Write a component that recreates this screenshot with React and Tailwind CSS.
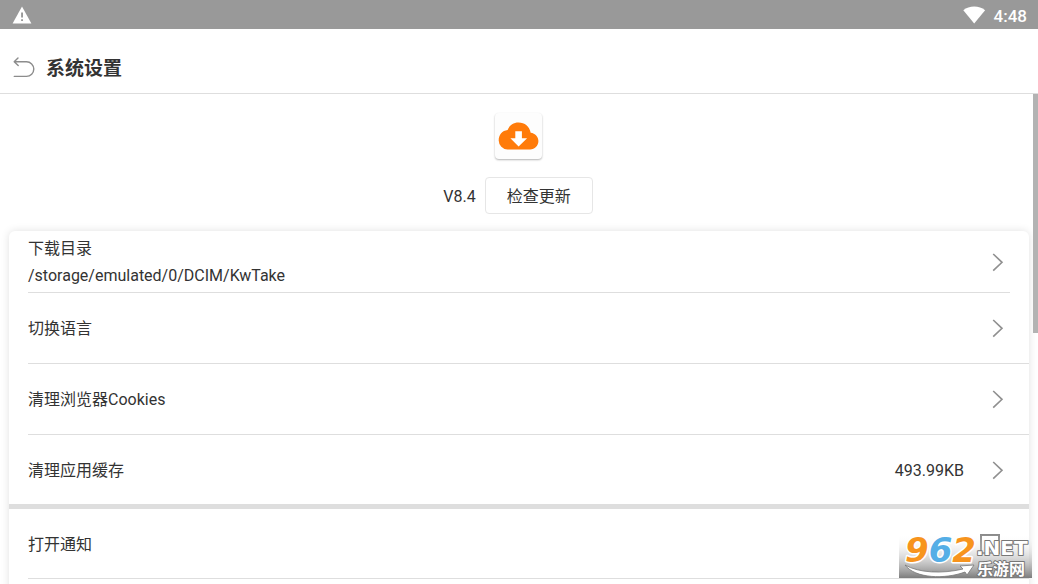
import React, { useState } from "react";

const BackIcon = () => (
    <svg className="w-6 h-6" viewBox="0 0 24 24" fill="none" stroke="#8c8c8c" strokeWidth="1.4" strokeLinecap="round" strokeLinejoin="round">
        <path d="M6 1 2.200 4.800l4 3.800M2.500 4.800h12a7.300 7.300 0 0 1 0 14.600H2.300" />
    </svg>
);

const Chevron = () => (
    <svg className="w-3 h-5 shrink-0" viewBox="0 0 12 20" fill="none" stroke="#909090" strokeWidth="1.6">
        <path d="M1.2 2 10 10.3 1.2 18.6" />
    </svg>
);

const StatusBar = () => (
    <div className="h-[29px] shrink-0 bg-[#999999] flex items-center justify-between pl-3 pr-[11px] text-white">
        <svg className="w-5 h-[18px]" viewBox="0 0 20 18" fill="#fff">
            <path d="M10 .5 19.4 17.5H.6Z" />
            <path d="M9.1 6.6h1.9v5H9.1zM9.1 13.2h1.9v1.9H9.1z" fill="#999" />
        </svg>
        <div className="flex items-center gap-2">
            <svg className="w-[23px] h-[18px]" viewBox="0 0 23 18" fill="#fff">
                <path d="M.3 4.2C3.3 1.9 7.100.6 11.200.6s7.900 1.300 10.900 3.600L11.200 17.600Z" />
            </svg>
            <span className="text-[17px] leading-5 font-medium pt-0.5">4:48</span>
        </div>
    </div>
);

const AppLogo = () => (
    <div className="w-[47px] h-[46px] rounded-sm bg-[#fdfdfd] shadow-[0_1px_2px_rgba(0,0,0,0.3)] flex items-center justify-center">
        <svg className="w-[41px] h-7" viewBox="0 0 41 28">
            <path
                d="M9.500 27.500A9.300 9.300 0 0 1 .7 18.400C.7 13 4.300 8.700 9.600 8.100 11.300 3.600 15.300.6 20.500.6c6.300 0 11 4.100 12.200 10.100 4.500.6 7.700 4 7.700 8.300 0 4.800-3.600 8.500-8.300 8.500Z"
                fill="#ff7b0a"
            />
            <path d="M17.300 9.300h6.600v7h5.200l-8.500 8.200-8.200-8.200h4.900Z" fill="#fff" />
        </svg>
    </div>
);

const SettingRow = ({ label, value, last }) => (
    <button
        type="button"
        className={`flex items-center justify-between text-left ml-[19px] pr-[25px] ${last ? "h-[69px]" : "h-[71px] border-b border-[#dedede]"}`}
    >
        <span className="pt-0.5">{label}</span>
        <span className="flex items-center gap-7">
            {value && <span className="pt-0.5">{value}</span>}
            <Chevron />
        </span>
    </button>
);

const Watermark = () => (
    <svg
        className="absolute right-[6px] bottom-[6px] w-[133px] h-11 overflow-visible"
        viewBox="0 0 133 44"
        strokeLinejoin="round"
    >
        <defs>
            <linearGradient id="shade" x1="0" y1="0" x2="0" y2="1">
                <stop offset="0" stopColor="#fff" stopOpacity="0" />
                <stop offset="1" stopColor="#7c7c7c" />
            </linearGradient>
        </defs>
        <rect width="133" height="44" fill="url(#shade)" />
        <path d="M6 31c14 8 37 9 58 4l-3-3 14-1-7 10-2-3C46 45.500 16 44.500 6 31Z" fill="#fff" stroke="#777" strokeWidth=".8" />
        <text x="6" y="28" className="font-['DejaVu_Sans'] font-bold italic text-[34px]" fill="#f7941d" stroke="#fff" strokeWidth="3" paintOrder="stroke">
            9<tspan fill="#55aee6">6</tspan>2
        </text>
        <text x="77" y="21" className="font-['DejaVu_Sans'] font-bold text-[20px]" fill="#fff" stroke="#777" strokeWidth="2" paintOrder="stroke">
            .NET
        </text>
        <text x="78" y="41" className="font-['Liberation_Sans','Noto_Sans_CJK_SC',sans-serif] font-bold text-base" fill="#fff" stroke="#777" strokeWidth="2" paintOrder="stroke">
            乐游网
        </text>
    </svg>
);

const App = () => {
    const [notify, setNotify] = useState(false);

    return (
        <div className="relative h-screen overflow-hidden flex flex-col bg-white text-[#333333] text-base font-[Roboto,'Noto_Sans_CJK_SC',sans-serif]">
            <StatusBar />
            <header className="h-[65px] shrink-0 flex items-center gap-[10px] pl-3 pt-[15px] border-b border-[#dedede]">
                <button type="button" aria-label="返回">
                    <BackIcon />
                </button>
                <h1 className="text-[19px] leading-6 font-bold">系统设置</h1>
            </header>

            <main className="relative flex-1 min-h-0 overflow-hidden">
                <section className="flex flex-col items-center gap-[18px] pt-[19px] pb-[17px] pr-0.5">
                    <AppLogo />
                    <div className="flex items-center gap-[9px]">
                        <span className="pt-0.5">V8.4</span>
                        <button type="button" className="w-[108px] h-[37px] pt-0.5 rounded-sm border border-[#e6e6e6] bg-white">
                            检查更新
                        </button>
                    </div>
                </section>

                <section className="mx-[9px] flex flex-col rounded-md bg-white shadow-[0_0_8px_rgba(0,0,0,0.12)]">
                    <button type="button" className="mx-[19px] pr-[6px] h-[62px] flex items-center justify-between text-left border-b border-[#dedede]">
                        <span className="flex flex-col gap-[3px] pt-0.5">
                            <span className="leading-6">下载目录</span>
                            <span className="leading-6">/storage/emulated/0/DCIM/KwTake</span>
                        </span>
                        <Chevron />
                    </button>
                    <SettingRow label="切换语言" />
                    <SettingRow label="清理浏览器Cookies" />
                    <SettingRow label="清理应用缓存" value="493.99KB" last />
                    <div className="h-[5px] bg-[#dedede]" />
                    <label className="ml-[19px] pr-[29px] h-[70px] flex items-center justify-between border-b border-[#dedede]">
                        <span className="pt-0.5">打开通知</span>
                        <input
                            type="checkbox"
                            checked={notify}
                            onChange={(e) => setNotify(e.target.checked)}
                            className="appearance-none w-5 h-5 border-2 border-[#8a8a8a] bg-white checked:bg-[#ff7b0a]"
                        />
                    </label>
                    <div className="h-[71px]" />
                </section>

                {/* scroll thumb */}
                <div className="absolute right-0 top-0 w-[5px] h-[239px] bg-[#b3b3b3]" />
            </main>

            <Watermark />
        </div>
    );
};

export default App;
